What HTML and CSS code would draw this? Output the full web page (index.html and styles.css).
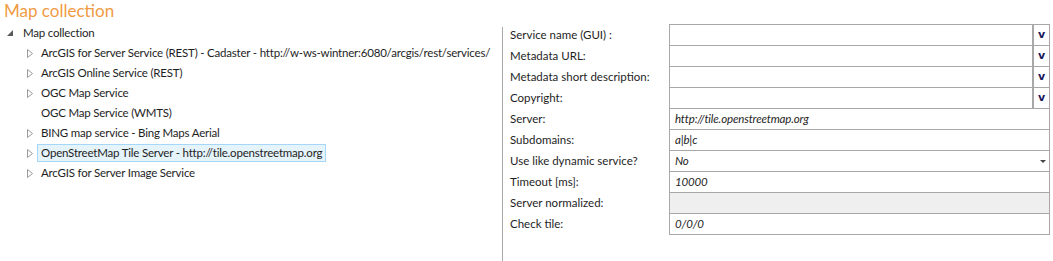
FILE: index.html
```html
<!DOCTYPE html>
<html>
  <head>
    <meta charset="utf-8">
    <title>Map collection</title>
    <link rel="stylesheet" href="styles.css">
  </head>
  <body>
    <h1 class="title">Map collection</h1>
    <div class="main">
      <div class="tree">
        <div class="node root">
          <span class="toggle"><svg width="6" height="6" viewBox="0 0 6 6"><polygon points="6,0 6,6 0,6" fill="#5a5a5a"/></svg></span>
          <span class="text">Map collection</span>
        </div>
        <div class="children">
          <div class="node">
            <span class="toggle"><svg width="6" height="9" viewBox="0 0 6 9"><polygon points="0.5,0.5 5.5,4.5 0.5,8.5" fill="none" stroke="#9a9a9a"/></svg></span>
            <span class="text">ArcGIS for Server Service (REST) - Cadaster - http://w-ws-wintner:6080/arcgis/rest/services/</span>
          </div>
          <div class="node">
            <span class="toggle"><svg width="6" height="9" viewBox="0 0 6 9"><polygon points="0.5,0.5 5.5,4.5 0.5,8.5" fill="none" stroke="#9a9a9a"/></svg></span>
            <span class="text">ArcGIS Online Service (REST)</span>
          </div>
          <div class="node">
            <span class="toggle"><svg width="6" height="9" viewBox="0 0 6 9"><polygon points="0.5,0.5 5.5,4.5 0.5,8.5" fill="none" stroke="#9a9a9a"/></svg></span>
            <span class="text">OGC Map Service</span>
          </div>
          <div class="node">
            <span class="toggle"></span>
            <span class="text">OGC Map Service (WMTS)</span>
          </div>
          <div class="node">
            <span class="toggle"><svg width="6" height="9" viewBox="0 0 6 9"><polygon points="0.5,0.5 5.5,4.5 0.5,8.5" fill="none" stroke="#9a9a9a"/></svg></span>
            <span class="text">BING map service - Bing Maps Aerial</span>
          </div>
          <div class="node">
            <span class="toggle"><svg width="6" height="9" viewBox="0 0 6 9"><polygon points="0.5,0.5 5.5,4.5 0.5,8.5" fill="none" stroke="#9a9a9a"/></svg></span>
            <span class="text selected">OpenStreetMap Tile Server - http://tile.openstreetmap.org</span>
          </div>
          <div class="node">
            <span class="toggle"><svg width="6" height="9" viewBox="0 0 6 9"><polygon points="0.5,0.5 5.5,4.5 0.5,8.5" fill="none" stroke="#9a9a9a"/></svg></span>
            <span class="text">ArcGIS for Server Image Service</span>
          </div>
        </div>
      </div>
      <div class="divider"></div>
      <div class="props">
        <div class="prow">
          <div class="plabel">Service name (GUI) :</div>
          <div class="pvalue"><span class="pinput"></span><span class="pbutton">v</span></div>
        </div>
        <div class="prow">
          <div class="plabel">Metadata URL:</div>
          <div class="pvalue"><span class="pinput"></span><span class="pbutton">v</span></div>
        </div>
        <div class="prow">
          <div class="plabel">Metadata short description:</div>
          <div class="pvalue"><span class="pinput"></span><span class="pbutton">v</span></div>
        </div>
        <div class="prow">
          <div class="plabel">Copyright:</div>
          <div class="pvalue"><span class="pinput"></span><span class="pbutton">v</span></div>
        </div>
        <div class="prow">
          <div class="plabel">Server:</div>
          <div class="pvalue"><span class="pinput">http://tile.openstreetmap.org</span></div>
        </div>
        <div class="prow">
          <div class="plabel">Subdomains:</div>
          <div class="pvalue"><span class="pinput">a|b|c</span></div>
        </div>
        <div class="prow">
          <div class="plabel">Use like dynamic service?</div>
          <div class="pvalue"><span class="pinput">No</span><span class="pdrop"><svg width="6" height="3" viewBox="0 0 6 3"><polygon points="0,0 6,0 3,3" fill="#444"/></svg></span></div>
        </div>
        <div class="prow">
          <div class="plabel">Timeout [ms]:</div>
          <div class="pvalue"><span class="pinput">10000</span></div>
        </div>
        <div class="prow">
          <div class="plabel">Server normalized:</div>
          <div class="pvalue readonly"><span class="pinput"></span></div>
        </div>
        <div class="prow last">
          <div class="plabel">Check tile:</div>
          <div class="pvalue"><span class="pinput">0/0/0</span></div>
        </div>
      </div>
    </div>
  </body>
</html>
```

FILE: styles.css
```css
body {
  margin: 0;
  font-family: Lato, "Noto Sans", sans-serif;
  font-size: 11.5px;
  color: #1e1e1e;
  background: #fff;
  height: 261px;
  overflow: hidden;
}

.title {
  margin: 0;
  padding-left: 4px;
  height: 23px;
  line-height: 22px;
  font-size: 17px;
  font-weight: normal;
  color: #ef9b45;
}

.main {
  display: flex;
  height: 238px;
}

/* Tree on the left */
.tree {
  width: 502px;
  letter-spacing: -0.2px;
}

.node {
  display: flex;
  align-items: center;
  height: 20px;
  white-space: nowrap;
}

.root {
  padding-left: 7px;
}

.root .toggle {
  width: 15px;
}

.children .node {
  padding-left: 27px;
}

.toggle {
  flex-shrink: 0;
  display: flex;
  align-items: center;
  width: 14px;
  height: 20px;
}

.text {
  padding: 0 3px 0 0;
  line-height: 16px;
  border: 1px solid transparent;
}

.children .text {
  margin-left: -4px;
  padding-left: 3px;
}

.selected {
  background: #e5f3fb;
  border-color: #a6d7fa;
}

.divider {
  width: 1px;
  margin-top: 4px;
  background: #a8a8a8;
}

/* Property grid on the right */
.props {
  flex: 1;
  padding: 1px 3px 0 7px;
}

.prow {
  display: flex;
  height: 21px;
}

.plabel {
  width: 159px;
  line-height: 21px;
  white-space: nowrap;
}

.pvalue {
  flex: 1;
  display: flex;
  border: 1px solid #a8a8a8;
  border-bottom: none;
}

.prow.last {
  height: 22px;
}

.prow.last .pvalue {
  border-bottom: 1px solid #a8a8a8;
}

.pvalue.readonly {
  background: #efefef;
}

.pinput {
  flex: 1;
  padding-left: 5px;
  line-height: 20px;
  letter-spacing: -0.15px;
  font-style: italic;
  white-space: nowrap;
}

.pbutton {
  width: 15px;
  border-left: 2px solid #a8a8a8;
  text-align: center;
  line-height: 20px;
  font-family: "DejaVu Sans", sans-serif;
  font-size: 11px;
  font-weight: bold;
  color: #17175a;
}

.pdrop {
  width: 9px;
  display: flex;
  align-items: center;
}
```
